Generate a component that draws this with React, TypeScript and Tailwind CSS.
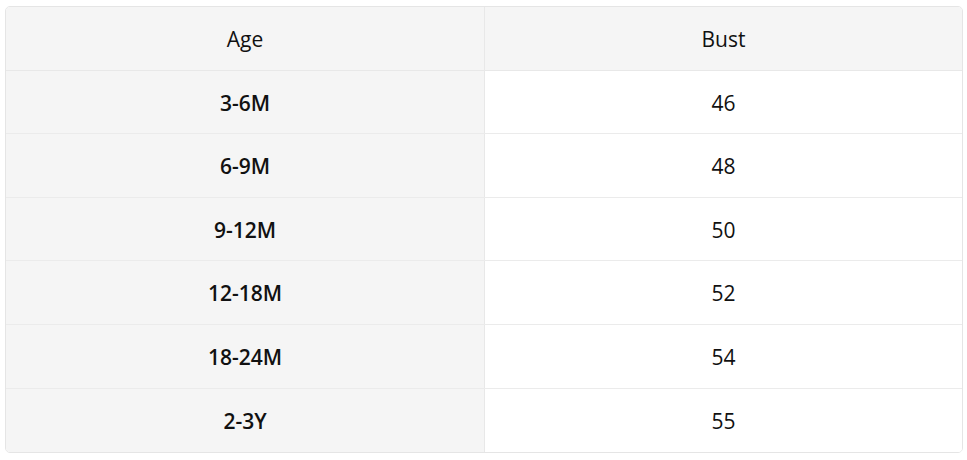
const rows = [
  { age: "3-6M", bust: "46" },
  { age: "6-9M", bust: "48" },
  { age: "9-12M", bust: "50" },
  { age: "12-18M", bust: "52" },
  { age: "18-24M", bust: "54" },
  { age: "2-3Y", bust: "55" },
];

export default function App() {
  return (
    <div
      className="w-[967px] h-[460px] bg-white pl-[5px] pt-[6px]"
      style={{ fontFamily: '"Open Sans", "Noto Sans", sans-serif' }}
    >
      <div className="w-[958px] rounded-[5px] border border-[#e5e5e5] overflow-hidden text-[#111]">
        {/* Header */}
        <div className="grid grid-cols-[479px_1fr] h-[63.6px] border-b border-[#e8e8e8] bg-[#f5f5f5] text-[21px]">
          <div className="flex items-center justify-center pt-[3px] border-r border-[#e8e8e8]">Age</div>
          <div className="flex items-center justify-center pt-[3px]">Bust</div>
        </div>

        {rows.map((r, i) => (
          <div
            key={r.age}
            className={`grid grid-cols-[479px_1fr] h-[63.6px] text-[21px] ${
              i < rows.length - 1 ? "border-b border-[#ebebeb]" : ""
            }`}
          >
            <div className="flex items-center justify-center pt-[3px] bg-[#f5f5f5] border-r border-[#e8e8e8] font-semibold">
              {r.age}
            </div>
            <div className="flex items-center justify-center pt-[3px] bg-white">{r.bust}</div>
          </div>
        ))}
      </div>
    </div>
  );
}
